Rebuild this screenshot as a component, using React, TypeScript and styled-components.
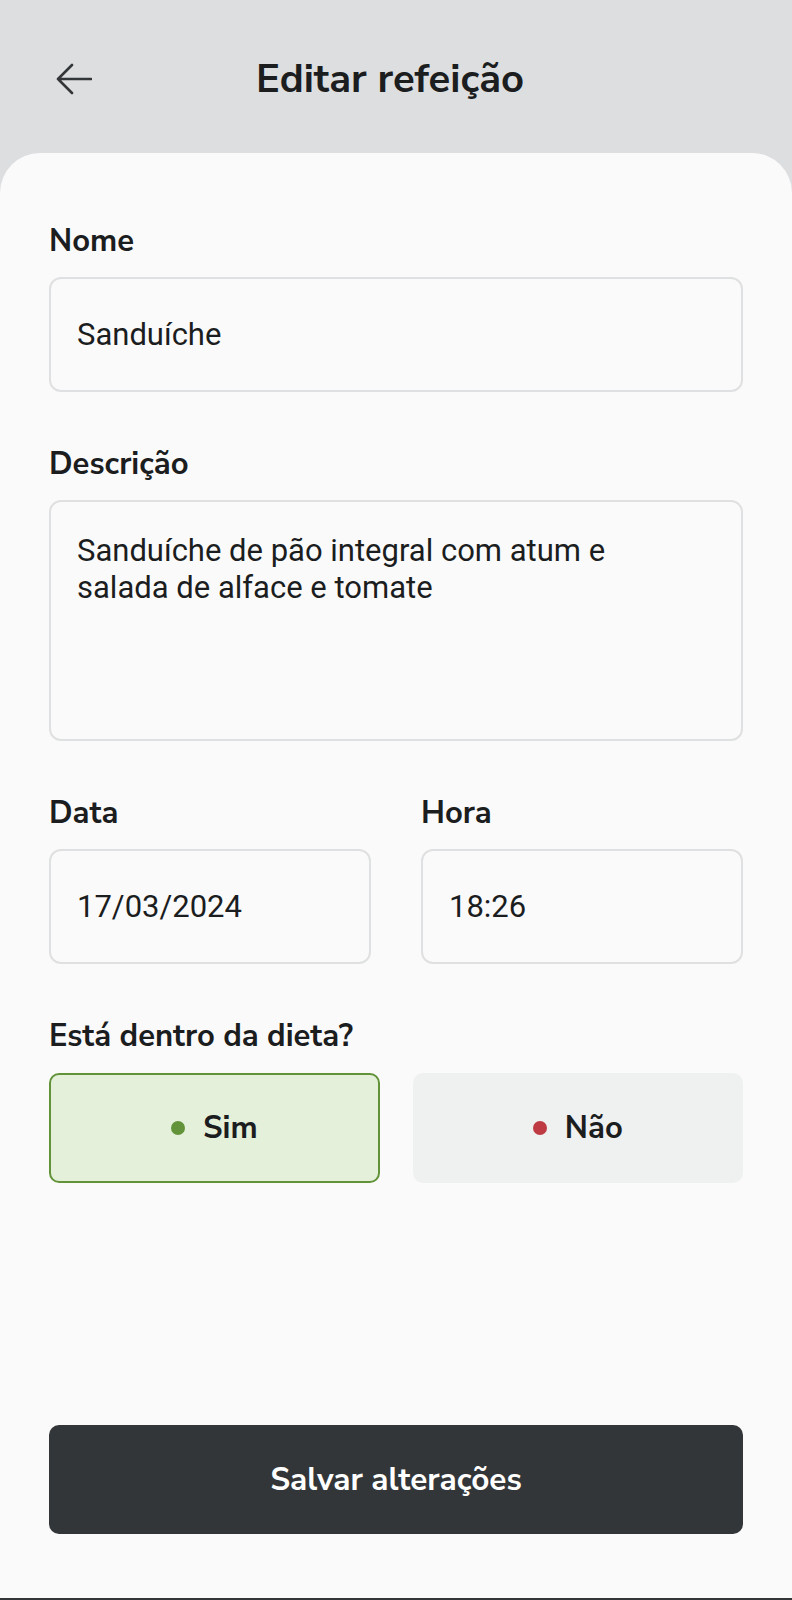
import * as React from "react";
import styled, { createGlobalStyle } from "styled-components";

const GlobalStyle = createGlobalStyle`
  html, body {
    margin: 0;
    padding: 0;
    background: #dddee0;
  }
  * {
    box-sizing: border-box;
  }
`;

const headingFont = `"Nunito Sans", Lato, "Noto Sans", sans-serif`;
const inputFont = `Roboto, "Noto Sans", sans-serif`;

const Page = styled.div`
  min-height: 100vh;
  display: flex;
  flex-direction: column;
  background: #dddee0;
  border-bottom: 2px solid #333638;
`;

const Header = styled.header`
  height: 153px;
  padding: 4px 56px 0;
  display: grid;
  grid-template-columns: 36px 1fr 48px;
  align-items: center;
`;

const BackButton = styled.button`
  width: 36px;
  height: 32px;
  padding: 0;
  border: none;
  background: transparent;
  color: #333638;
  display: flex;
  align-items: center;
  cursor: pointer;
`;

const Title = styled.h1`
  margin: 0;
  text-align: center;
  font-family: ${headingFont};
  font-weight: 700;
  font-size: 40px;
  line-height: 48px;
  color: #1b1d1e;
`;

const Card = styled.main`
  flex: 1;
  background: #fafafa;
  border-radius: 40px 40px 0 0;
  padding: 71px 49px 64px;
  display: flex;
  flex-direction: column;
`;

const Form = styled.div`
  display: flex;
  flex-direction: column;
  gap: 55px;
`;

const Field = styled.label`
  display: flex;
  flex-direction: column;
  gap: 19px;
  min-width: 0;
`;

const Label = styled.span`
  font-family: ${headingFont};
  font-weight: 700;
  font-size: 31px;
  line-height: 34px;
  color: #1b1d1e;
`;

const inputStyles = `
  width: 100%;
  border: 2px solid #dfe0e1;
  border-radius: 12px;
  background: #fafafa;
  font-family: ${inputFont};
  font-size: 31px;
  color: #1b1d1e;
  padding: 0 26px;
  outline: none;
`;

const Input = styled.input`
  ${inputStyles}
  height: 115px;
`;

const TextArea = styled.textarea`
  ${inputStyles}
  height: 241px;
  padding: 30px 52px 0 26px;
  line-height: 37px;
  resize: none;
`;

const Row = styled.div`
  display: grid;
  grid-template-columns: 1fr 1fr;
  gap: 50px;
`;

const ToggleGroup = styled.div`
  display: flex;
  flex-direction: column;
  gap: 20px;
`;

const ToggleRow = styled.div`
  display: grid;
  grid-template-columns: 1fr 1fr;
  gap: 33px;
`;

const Toggle = styled.button<{ $active: boolean; $tone: "good" | "bad" }>`
  height: 110px;
  border-radius: 10px;
  border: 2px solid
    ${(p) =>
      p.$active ? (p.$tone === "good" ? "#639339" : "#bf3b44") : "#eff0f0"};
  background: ${(p) =>
    p.$active ? (p.$tone === "good" ? "#e5f0db" : "#f4e6e7") : "#eff0f0"};
  display: flex;
  align-items: center;
  justify-content: center;
  gap: 18px;
  font-family: ${headingFont};
  font-weight: 700;
  font-size: 31px;
  color: #1b1d1e;
  cursor: pointer;
`;

const Dot = styled.span<{ $tone: "good" | "bad" }>`
  width: 14px;
  height: 14px;
  border-radius: 50%;
  background: ${(p) => (p.$tone === "good" ? "#639339" : "#bf3b44")};
`;

const SaveButton = styled.button`
  margin-top: auto;
  height: 109px;
  width: 100%;
  border: none;
  border-radius: 10px;
  background: #333638;
  color: #ffffff;
  font-family: ${headingFont};
  font-weight: 700;
  font-size: 31.5px;
  cursor: pointer;
`;

const ArrowLeft = () => (
  <svg width="36" height="32" viewBox="0 0 36 32" fill="none">
    <path
      d="M16 2 L2 16 L16 30 M2 16 H35"
      stroke="currentColor"
      strokeWidth="2.6"
      strokeLinecap="round"
      strokeLinejoin="round"
    />
  </svg>
);

export default function App() {
  const [inDiet, setInDiet] = React.useState(true);
  const [name, setName] = React.useState("Sanduíche");
  const [desc, setDesc] = React.useState(
    "Sanduíche de pão integral com atum e salada de alface e tomate",
  );
  const [date, setDate] = React.useState("17/03/2024");
  const [hour, setHour] = React.useState("18:26");

  return (
    <>
      <GlobalStyle />
      <Page>
        <Header>
          <BackButton aria-label="Voltar">
            <ArrowLeft />
          </BackButton>
          <Title>Editar refeição</Title>
          <span />
        </Header>
        <Card>
          <Form>
            <Field>
              <Label>Nome</Label>
              <Input value={name} onChange={(e) => setName(e.target.value)} />
            </Field>
            <Field>
              <Label>Descrição</Label>
              <TextArea value={desc} onChange={(e) => setDesc(e.target.value)} />
            </Field>
            <Row>
              <Field>
                <Label>Data</Label>
                <Input value={date} onChange={(e) => setDate(e.target.value)} />
              </Field>
              <Field>
                <Label>Hora</Label>
                <Input value={hour} onChange={(e) => setHour(e.target.value)} />
              </Field>
            </Row>
            <ToggleGroup>
              <Label>Está dentro da dieta?</Label>
              <ToggleRow>
                <Toggle
                  $active={inDiet}
                  $tone="good"
                  onClick={() => setInDiet(true)}
                >
                  <Dot $tone="good" />
                  Sim
                </Toggle>
                <Toggle
                  $active={!inDiet}
                  $tone="bad"
                  onClick={() => setInDiet(false)}
                >
                  <Dot $tone="bad" />
                  Não
                </Toggle>
              </ToggleRow>
            </ToggleGroup>
          </Form>
          <SaveButton>Salvar alterações</SaveButton>
        </Card>
      </Page>
    </>
  );
}
